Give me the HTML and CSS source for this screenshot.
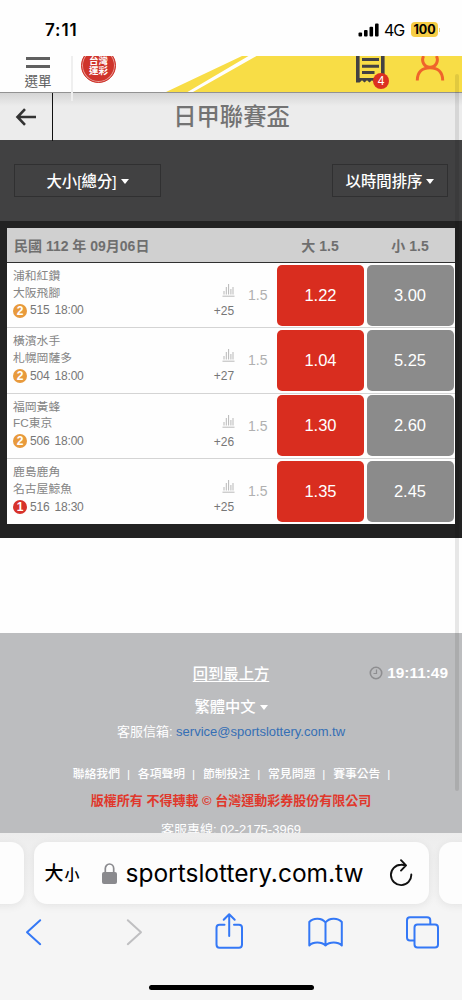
FILE: index.html
```html
<!DOCTYPE html>
<html lang="zh-Hant">
<head>
<meta charset="utf-8">
<title>日甲聯賽盃</title>
<link rel="stylesheet" href="styles.css">
</head>
<body>
<div class="phone">
  <div class="status">
    <span class="time">7:11</span>
    <svg class="signal" width="21" height="14" viewBox="0 0 21 14"><rect x="0.5" y="9.5" width="3.6" height="4" rx="1"/><rect x="6" y="7" width="3.6" height="6.5" rx="1"/><rect x="11.5" y="3.8" width="3.6" height="9.7" rx="1"/><rect x="17" y="0.5" width="3.6" height="13" rx="1"/></svg>
    <span class="net">4G</span>
    <span class="battery">100</span><i class="nub"></i>
  </div>

  <header class="header">
    <svg class="swoosh" width="462" height="36" viewBox="0 0 462 36"><path fill="#f8dd46" d="M166 36 242 0H248.500L187.500 36ZM193 36 256.500 0H462V36Z"/></svg>
    <div class="menu"><i></i><i></i><span>選單</span></div>
    <div class="logo"><div class="seal"><span>台灣<br>運彩</span></div></div>
    <div class="slip">
      <svg width="30" height="28" viewBox="0 0 30 28"><path fill="#424143" d="M0 0H3.6V22H25V0H28.6V26L26 24.3 23.5 26.5 21 24.3 18.5 26.5 16 24.3 13.5 26.5 11 24.3 8.5 26.5 6 24.3 3.6 26.5H0Z"/><path stroke="#424143" stroke-width="3" d="M6 3.5H23M6 10.2H23M6 16.6H18.5"/></svg>
      <b>4</b>
    </div>
    <svg class="user" width="30" height="25" viewBox="0 0 30 25"><g fill="none" stroke="#ef642b" stroke-width="3"><path d="M8.600 0C6 5 9 11.300 15 11.300S24 5 21.400 0"/><path d="M2.300 24.500C2.300 16 7.500 11.800 15 11.800S27.700 16 27.700 24.500"/></g></svg>
    <i class="divider"></i>
  </header>

  <div class="titlebar">
    <div class="back"><svg width="22" height="18" viewBox="0 0 22 18"><path fill="none" stroke="#333" stroke-width="2.600" d="M21 9H3M10 1.200 2.500 9 10 16.800"/></svg></div>
    <h1>日甲聯賽盃</h1>
  </div>

  <div class="filters">
    <div class="select type"><span>大小[總分]</span><i class="caret"></i></div>
    <div class="select sort"><span>以時間排序</span><i class="caret"></i></div>
  </div>

  <main class="board">
    <div class="table">
      <div class="row head"><span class="date">民國 112 年 09月06日</span><span class="col">大 1.5</span><span class="col">小 1.5</span></div>
      <div class="row">
        <div class="match"><p>浦和紅鑽</p><p>大阪飛腳</p><p class="meta"><b>2</b><span>515 18:00</span></p></div>
        <div class="more"><svg width="13" height="14" viewBox="0 0 13 14"><path d="M0.500 13.200H12.500M2 11.500V8M4.300 11.500V4M6.600 11.500V1M8.900 11.500V6M11 11.500V4"/></svg><span>+25</span></div>
        <div class="line">1.5</div><div class="odd red">1.22</div><div class="odd">3.00</div>
      </div>
      <div class="row">
        <div class="match"><p>橫濱水手</p><p>札幌岡薩多</p><p class="meta"><b>2</b><span>504 18:00</span></p></div>
        <div class="more"><svg width="13" height="14" viewBox="0 0 13 14"><path d="M0.500 13.200H12.500M2 11.500V8M4.300 11.500V4M6.600 11.500V1M8.900 11.500V6M11 11.500V4"/></svg><span>+27</span></div>
        <div class="line">1.5</div><div class="odd red">1.04</div><div class="odd">5.25</div>
      </div>
      <div class="row">
        <div class="match"><p>福岡黃蜂</p><p>FC東京</p><p class="meta"><b>2</b><span>506 18:00</span></p></div>
        <div class="more"><svg width="13" height="14" viewBox="0 0 13 14"><path d="M0.500 13.200H12.500M2 11.500V8M4.300 11.500V4M6.600 11.500V1M8.900 11.500V6M11 11.500V4"/></svg><span>+26</span></div>
        <div class="line">1.5</div><div class="odd red">1.30</div><div class="odd">2.60</div>
      </div>
      <div class="row">
        <div class="match"><p>鹿島鹿角</p><p>名古屋鯨魚</p><p class="meta"><b class="one">1</b><span>516 18:30</span></p></div>
        <div class="more"><svg width="13" height="14" viewBox="0 0 13 14"><path d="M0.500 13.200H12.500M2 11.500V8M4.300 11.500V4M6.600 11.500V1M8.900 11.500V6M11 11.500V4"/></svg><span>+25</span></div>
        <div class="line">1.5</div><div class="odd red">1.35</div><div class="odd">2.45</div>
      </div>
    </div>
  </main>

  <footer class="footer">
    <div class="toprow"><a class="totop">回到最上方</a><span class="clock"><svg width="14" height="14" viewBox="0 0 14 14"><g fill="none" stroke="#8e8e90"><circle cx="7" cy="7" r="5.700" stroke-width="1.600"/><path stroke-width="1.200" d="M7.500 3.500V7.500H4.500"/></g></svg>19:11:49</span></div>
    <div class="lang">繁體中文<i class="caret"></i></div>
    <div class="mail">客服信箱: <a>service@sportslottery.com.tw</a></div>
    <div class="links"><span>聯絡我們</span><span>各項聲明</span><span>節制投注</span><span>常見問題</span><span>賽事公告</span></div>
    <div class="copy">版權所有 不得轉載 © 台灣運動彩券股份有限公司</div>
    <div class="phone-no">客服專線: 02-2175-3969</div>
  </footer>

  <div class="browser">
    <div class="tabs">
      <div class="tab"></div>
      <div class="tab address">
        <span class="aa">大<small>小</small></span>
        <svg class="lock" width="15" height="21" viewBox="0 0 15 21"><rect y="9" width="15" height="12" rx="2" fill="#8a8a8e"/><path d="M3.300 10V5.500a4.200 4.500 0 0 1 8.400 0V10" fill="none" stroke="#8a8a8e" stroke-width="1.700"/></svg>
        <span class="url">sportslottery.com.tw</span>
        <svg class="reload" width="24" height="28" viewBox="0 0 24 28"><path fill="none" stroke="#111" stroke-width="1.900" stroke-linecap="round" stroke-linejoin="round" d="M22.300 15.500A10.200 10.200 0 1 1 12 5.700Q14.500 5.600 17 6.400M12 1.200 17 6.400 12 11.600"/></svg>
      </div>
      <div class="tab"></div>
    </div>
    <div class="tools">
      <svg width="462" height="44" viewBox="0 0 462 44"><g fill="none" stroke="#3478f6" stroke-width="2" stroke-linecap="round" stroke-linejoin="round"><path d="M40.200 11.200 27 23.200 40.200 35.200"/><path stroke="#bfbfc1" d="M127.800 11.200 141 23.200 127.800 35.200"/><path d="M224.500 15.700H219.500Q216.500 15.700 216.500 18.700V35.500Q216.500 38.700 219.500 38.700H239Q242 38.700 242 35.500V18.700Q242 15.700 239 15.700H234M229.200 27V5.500M223.700 10.800 229.200 5.300 234.700 10.800"/><path d="M325.500 13.500C322 8.500 313 8.500 309.300 13V36.500C313 32.500 321.500 32.500 325.500 36.500C329.500 32.500 338 32.500 341.800 36.500V13C338 8.500 329 8.500 325.500 13.500ZM325.500 13.500V36.500"/><rect x="414.500" y="15.500" width="23.500" height="23" rx="3"/><path d="M414 31.500H410Q407 31.500 407 28.500V11.500Q407 8.300 410 8.300H427Q430.300 8.300 430.300 11.500V15"/></g></svg>
    </div>
    <div class="home"></div>
  </div>
  <div class="scrollbar"></div>
</div>
</body>
</html>
```
FILE: styles.css
```css
* { box-sizing: border-box; }
body, p, h1 { margin: 0; }
body { background: #fff; font-family: "Liberation Sans", "Noto Sans CJK TC", sans-serif; }
.phone { position: relative; width: 462px; height: 1000px; overflow: hidden; background: #fefefe; }

.status { display: flex; align-items: center; height: 56px; padding: 3px 20px 0 45px; }
.time { flex: none; font: 600 17px/20px Inter, sans-serif; color: #000; width: 313px; letter-spacing: 0.900px; }
.net { flex: none; font: 400 16px/20px Inter, sans-serif; margin-left: 5px; width: 27px; letter-spacing: -1px; }
.battery { flex: none; width: 27px; height: 15px; border-radius: 4px; background: #f6cd45; font: 700 12.500px/15px Inter, sans-serif; text-align: center; }
.nub { width: 1px; height: 4px; margin-left: 1px; background: #f3d772; flex: none; }
.signal { flex: none; }

.header { position: relative; display: flex; align-items: flex-start; height: 36px; }
.swoosh { position: absolute; left: 0; top: 0; }
.menu { display: flex; flex-direction: column; align-items: center; width: 76px; padding-top: 1px; }
.menu i { width: 24px; height: 3px; margin-bottom: 5px; background: #606060; }
.menu i + i { margin-bottom: 0; }
.menu span { font-size: 13.500px; line-height: 20px; margin-top: 4px; color: #606060; }
.logo { width: 35px; height: 28px; margin-left: 5px; overflow: hidden; }
.seal { display: flex; justify-content: center; width: 35px; height: 35px; margin-top: -8px; padding-top: 7px; border-radius: 50%; background: #cf342b; border: 1px solid #cf342b; box-shadow: inset 0 0 0 1px #e9a09a; }
.logo span { font-size: 9.500px; line-height: 10px; font-weight: 700; color: #fff; }
.slip { position: relative; margin-left: 240px; width: 32px; height: 35px; }
.slip b { position: absolute; left: 17px; top: 17px; width: 16px; height: 16px; border-radius: 50%; background: #dc3021; color: #fff; font-size: 12px; font-weight: 400; line-height: 16px; text-align: center; }
.user { position: relative; margin-left: 27px; }
.divider { position: absolute; left: 71px; top: 0; width: 2px; height: 45px; background: #efefef; z-index: 2; }

.titlebar { display: flex; height: 48px; border-top: 1px solid #929292; background: linear-gradient(#d5d5d5, #ececec 13px); }
.back { display: flex; align-items: center; justify-content: center; width: 53px; height: 48px; padding-bottom: 1px; border-right: 1px solid #111; }
.titlebar h1 { flex: 1; padding-right: 52px; text-align: center; font-size: 23.300px; line-height: 48px; font-weight: 500; color: #737373; }

.filters { display: flex; justify-content: space-between; height: 81px; padding: 24px 14px 0; background: #414142; }
.select { display: flex; align-items: center; justify-content: center; height: 33px; padding-bottom: 2px; border: 1px solid #303031; color: #fff; font-size: 15.400px; font-weight: 500; white-space: nowrap; }
.type { width: 147px; }
.sort { width: 116px; }
.caret { display: inline-block; border: 4.500px solid transparent; border-top: 5px solid #fff; border-bottom: 0; margin-left: 4px; vertical-align: 2px; }
.select .caret { margin-top: 3px; }

.board { height: 317px; padding: 7px 7px 14px; background: #222; }
.table { display: flex; flex-direction: column; height: 296px; background: #fefefe; }
.row { display: flex; align-items: center; height: 65.300px; border-bottom: 1px solid #d4d4d4; }
.row:last-child { border-bottom: 0; }
.row.head { height: 35px; flex: none; background: #d0d0d0; border-bottom: 1px solid #303030; color: #6f6f6f; font-size: 14px; font-weight: 700; }
.date { width: 268px; padding-left: 7px; }
.col { width: 90px; text-align: center; }
.match { width: 202px; padding: 0 0 2px 6px; color: #858585; font-size: 11.800px; line-height: 16.500px; }
.meta { display: flex; align-items: center; height: 19px; font-size: 12px; color: #777; }
.meta span { word-spacing: 2px; letter-spacing: -0.200px; }
.meta b { width: 14px; height: 14px; margin-right: 3px; border-radius: 50%; background: #e89a3c; color: #fff; font-size: 12px; line-height: 14px; text-align: center; }
.meta .one { background: #d7322b; }
.more { display: flex; flex-direction: column; align-items: center; width: 30px; padding-top: 11px; margin-left: 1px; color: #777; font-size: 12px; line-height: 14px; }
.more svg { margin: 0 0 7px 6px; }
.more path { stroke: #b8b8b8; stroke-width: 1; fill: none; }
.more span { margin-left: -2px; }
.line { width: 37px; padding-left: 8px; font-size: 14px; color: #b0b0b0; }
.odd { width: 87px; height: 61px; flex: none; border-radius: 5px; background: #8b8b8b; color: #fff; font-size: 16.500px; line-height: 61px; text-align: center; }
.odd.red { margin-right: 2.500px; background: #d92d1f; }

.footer { height: 200px; margin-top: 95px; padding-top: 27px; background: #bcbdbf; overflow: hidden; color: #fff; text-align: center; }
.toprow { display: grid; grid-template-columns: 150px 162px 150px; height: 26px; align-items: center; }
.totop { grid-column: 2; font-size: 15.300px; line-height: 24px; margin-top: 2px; text-decoration: underline; text-underline-offset: 2px; font-weight: 500; }
.clock { display: flex; align-items: center; justify-content: flex-end; gap: 4px; padding-right: 14px; font-size: 15.400px; font-weight: 700; }
.lang { height: 28px; margin-top: 7px; font-size: 15.300px; line-height: 28px; font-weight: 500; }
.mail { height: 22px; font-size: 13px; line-height: 22px; }
.mail a { color: #356fb5; }
.links { display: flex; justify-content: center; margin-top: 21px; padding-left: 9px; height: 20px; font-size: 11.800px; line-height: 20px; font-weight: 500; }
.links span { width: 65.100px; white-space: nowrap; text-align: left; }
.links span::after { content: "|"; margin-left: 7px; }
.copy { margin-top: 6px; height: 22px; font-size: 13px; line-height: 22px; font-weight: 700; color: #e0382c; }
.phone-no { margin-top: 8px; font-size: 13px; line-height: 20px; }

.browser { height: 167px; padding-top: 9px; background: linear-gradient(#ededed, #f5f5f5 75px); }
.tabs { display: flex; gap: 10px; margin: 0 -20px; }
.tab { flex: 1; height: 62px; border-radius: 13px; background: #fdfdfd; box-shadow: 0 2px 8px #00000012; }
.address { display: flex; flex: none; width: 395px; align-items: center; padding: 0 14px 0 11px; }
.aa { flex: none; width: 57px; padding-top: 2px; font-size: 19px; line-height: 30px; font-weight: 500; white-space: nowrap; }
.aa small { font-size: 15px; margin-left: 1px; }
.url { flex: none; margin-left: 9px; width: 263px; font: 400 24.500px/30px Inter, sans-serif; letter-spacing: 0; }
.lock, .reload { flex: none; }
.tools { height: 44px; margin-top: 5px; }
.tools svg { display: block; }
.home { width: 165px; height: 5px; margin: 32px auto 0; border-radius: 3px; background: #000; }
.scrollbar { position: absolute; left: 455px; top: 74px; width: 4px; height: 717px; border-radius: 2px; background: #00000017; }
```
